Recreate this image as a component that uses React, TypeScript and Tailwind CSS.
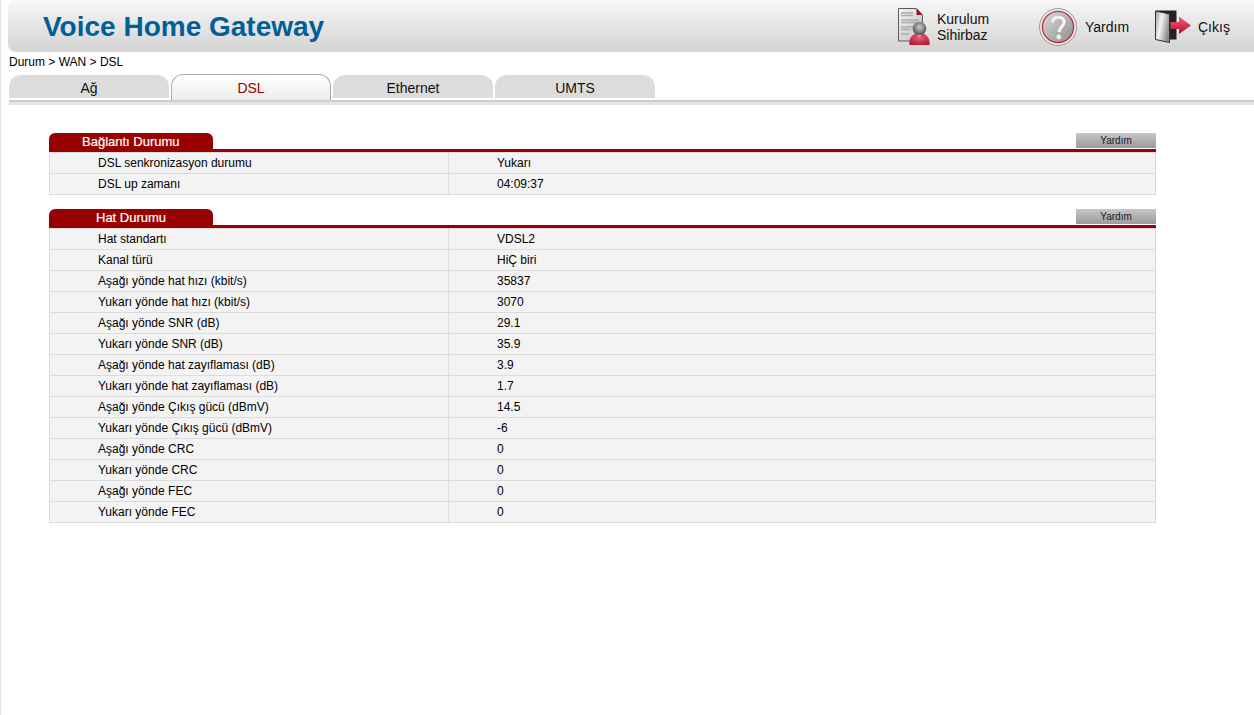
const font = { fontFamily: '"Liberation Sans", Arial, sans-serif' };

function WizardIcon() {
  return (
    <svg width="32" height="37" viewBox="0 0 32 37">
      <defs>
        <linearGradient id="pg" x1="0" y1="0" x2="1" y2="1">
          <stop offset="0" stopColor="#f6f6f6" />
          <stop offset="1" stopColor="#bdbdbd" />
        </linearGradient>
        <radialGradient id="bd" cx="0.5" cy="0.35" r="0.7">
          <stop offset="0" stopColor="#ee5a74" />
          <stop offset="1" stopColor="#b0182c" />
        </radialGradient>
        <radialGradient id="hd" cx="0.5" cy="0.4" r="0.6">
          <stop offset="0" stopColor="#cfcfcf" />
          <stop offset="1" stopColor="#4a4a4a" />
        </radialGradient>
      </defs>
      <path d="M0.5 0.5H18.5L24.5 7V33H0.5Z" fill="url(#pg)" stroke="#5a5a5a" />
      <path d="M18.5 0.5L24.5 7H18.5Z" fill="#9c1022" />
      <path d="M3 5H15M3 7.5H15M3 12H21M3 14.5H21M3 19H15M3 21.5H13M3 26H11" stroke="#ababab" strokeWidth="1.4" />
      <circle cx="21.5" cy="20.5" r="6.8" fill="url(#hd)" />
      <path d="M11.5 37C10.5 29.5 15.5 26 18 26L21.5 29L25 26C27.5 26 32.5 29.5 31.5 37Z" fill="url(#bd)" />
    </svg>
  );
}

function HelpIcon() {
  return (
    <svg width="38" height="38" viewBox="0 0 38 38">
      <defs>
        <linearGradient id="hg" x1="0" y1="0" x2="1" y2="1">
          <stop offset="0" stopColor="#dcdcdc" />
          <stop offset="1" stopColor="#8c8c8c" />
        </linearGradient>
      </defs>
      <circle cx="19" cy="19" r="18.4" fill="#f2f2f2" stroke="#8a8a8a" strokeWidth="0.9" />
      <circle cx="19" cy="19" r="15.6" fill="url(#hg)" stroke="#b8303e" strokeWidth="1.3" />
      <path d="M13.5 14.5C14 7.5 25.5 7.5 25 14.5C24.6 19 20.5 18.5 20 24" fill="none" stroke="#f4f4f4" strokeWidth="3.2" />
      <circle cx="19.8" cy="29" r="2.4" fill="#f4f4f4" />
    </svg>
  );
}

function ExitIcon() {
  return (
    <svg width="37" height="33" viewBox="0 0 37 33">
      <defs>
        <linearGradient id="dr" x1="0" y1="0" x2="1" y2="0.4">
          <stop offset="0" stopColor="#9a9a9a" />
          <stop offset="0.45" stopColor="#f4f4f4" />
          <stop offset="1" stopColor="#8e8e8e" />
        </linearGradient>
        <linearGradient id="ar" x1="0" y1="0" x2="0" y2="1">
          <stop offset="0" stopColor="#f0607c" />
          <stop offset="1" stopColor="#b01428" />
        </linearGradient>
      </defs>
      <path d="M1 0.5H21.5V29.5H1Z" fill="#222" />
      <path d="M0.5 1L14.5 4V32.5L0.5 29.5Z" fill="url(#dr)" stroke="#333" />
      <path d="M15.5 12H24V6.5L36 15.5L24 24V19H15.5Z" fill="url(#ar)" />
    </svg>
  );
}

function Yardim() {
  return (
    <button className="block w-20 h-[15px] bg-gradient-to-b from-[#c6c6c6] to-[#9c9c9c] text-[10px] leading-[15px] text-[#222] text-center">
      Yardım
    </button>
  );
}

function Section({ title, titleCls, rows }: { title: string; titleCls: string; rows: [string, string][] }) {
  return (
    <section className="w-[1107px]">
      <div className="flex items-start justify-between h-4">
        <div className={`w-[164px] h-4 bg-[#990000] rounded-t-md text-white leading-4 ${titleCls}`}>
          <span className="text-[13px] [-webkit-text-stroke:0.2px_white]">{title}</span>
        </div>
        <Yardim />
      </div>
      <div className="h-[3px] bg-[#990000]" />
      <div className="border-x border-b border-[#dcdcdc] bg-[#f3f3f3]">
        {rows.map(([l, v]) => (
          <div key={l} className="grid grid-cols-[399px_1fr] h-[21px] text-xs leading-5 text-black border-t border-[#dcdcdc]">
            <div className="pl-12 border-r border-[#dcdcdc]">{l}</div>
            <div className="pl-12">{v}</div>
          </div>
        ))}
      </div>
    </section>
  );
}

const conn: [string, string][] = [
  ['DSL senkronizasyon durumu', 'Yukarı'],
  ['DSL up zamanı', '04:09:37'],
];
const line: [string, string][] = [
  ['Hat standartı', 'VDSL2'],
  ['Kanal türü', 'HiÇ biri'],
  ['Aşağı yönde hat hızı (kbit/s)', '35837'],
  ['Yukarı yönde hat hızı (kbit/s)', '3070'],
  ['Aşağı yönde SNR (dB)', '29.1'],
  ['Yukarı yönde SNR (dB)', '35.9'],
  ['Aşağı yönde hat zayıflaması (dB)', '3.9'],
  ['Yukarı yönde hat zayıflaması (dB)', '1.7'],
  ['Aşağı yönde Çıkış gücü (dBmV)', '14.5'],
  ['Yukarı yönde Çıkış gücü (dBmV)', '-6'],
  ['Aşağı yönde CRC', '0'],
  ['Yukarı yönde CRC', '0'],
  ['Aşağı yönde FEC', '0'],
  ['Yukarı yönde FEC', '0'],
];

export default function App() {
  return (
    <div style={font} className="h-[715px] w-full bg-white border-l border-[#e6e6e6] overflow-hidden">
      <header className="ml-[7px] h-[52px] rounded-l-lg bg-gradient-to-b from-[#f7f7f7] to-[#d4d4d4] flex items-center border-b border-[#d8d8d8]">
        <h1 className="ml-[35px] mt-[2px] text-[28px] font-bold text-[#005f99] leading-none">Voice Home Gateway</h1>
        <nav className="ml-auto flex items-center text-sm text-[#111] leading-4 mt-[2px]">
          <div className="flex items-center w-[143px] pl-[2px]">
            <WizardIcon />
            <span className="ml-[7px]">Kurulum<br />Sihirbaz</span>
          </div>
          <div className="flex items-center w-[116px]">
            <HelpIcon />
            <span className="ml-2">Yardım</span>
          </div>
          <div className="flex items-center w-[99px]">
            <ExitIcon />
            <span className="ml-1.5">Çıkış</span>
          </div>
        </nav>
      </header>
      <div className="pl-2 h-[23px] text-xs leading-5 text-black">Durum &gt; WAN &gt; DSL</div>
      <div className="ml-2 flex gap-0.5 h-6 items-start">
        {['Ağ', 'DSL', 'Ethernet', 'UMTS'].map((t) => (
          <div
            key={t}
            className={
              t === 'DSL'
                ? 'w-40 h-[26px] -mt-px rounded-t-xl border border-b-0 border-[#aaaaaa] bg-gradient-to-b from-white to-[#ececec] text-center text-sm leading-[26px] text-[#990000]'
                : 'w-40 h-[23px] rounded-t-xl bg-[#dcdcdc] text-center text-sm leading-[26px] text-[#111]'
            }
          >
            {t}
          </div>
        ))}
      </div>
      <div className="ml-2 mt-px h-[5px] bg-[#e4e4e4] border-t-2 border-[#cdcdcd]" />
      <main className="pl-12 pt-7 flex flex-col gap-[14px]">
        <Section title="Bağlantı Durumu" titleCls="pl-[33px]" rows={conn} />
        <Section title="Hat Durumu" titleCls="pl-[47px]" rows={line} />
      </main>
    </div>
  );
}
